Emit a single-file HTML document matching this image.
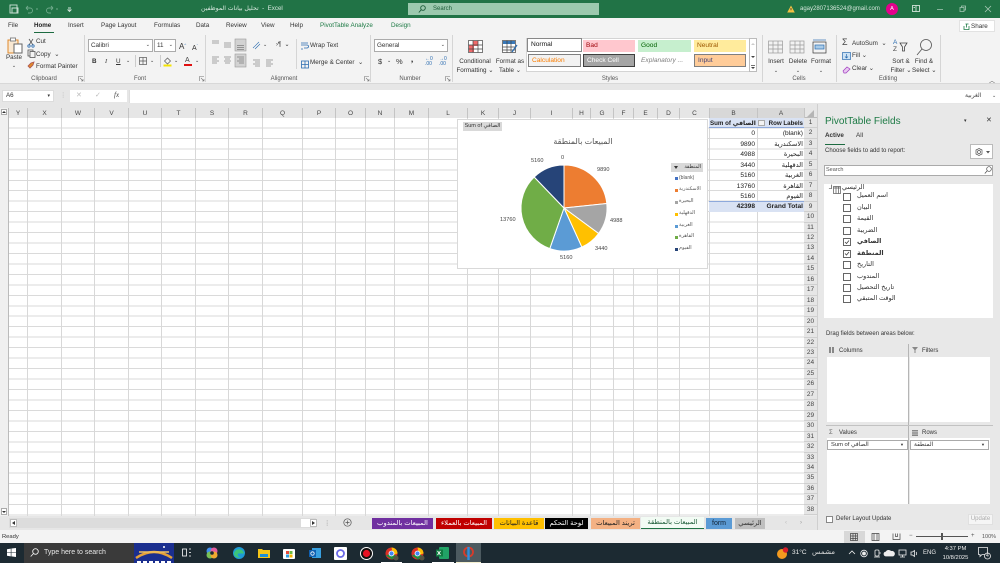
<!DOCTYPE html>
<html><head><meta charset="utf-8"><style>
html,body{margin:0;padding:0}
body{width:1000px;height:563px;overflow:hidden;position:relative;background:#e6e6e6;font:6.3px "Liberation Sans","DejaVu Sans",sans-serif;color:#333}
.a,.t,.c,.h{position:absolute}
.t{white-space:nowrap;line-height:9px}
.c{text-align:center;white-space:nowrap;line-height:8px}
.h{top:108px;height:10px;line-height:11px;text-align:center;font-size:6.5px;color:#444;background:#e6e6e6;border-right:1px solid #c4c4c4;box-sizing:border-box}
.v{position:absolute;top:118px;height:398px;width:1px;background:#d8d8d8}
.sep{position:absolute;width:1px;top:35px;height:47px;background:#d5d5d5}
.lab{position:absolute;top:75px;font-size:6px;color:#555;line-height:8px;text-align:center}
.box{position:absolute;background:#fff;border:1px solid #ababab;box-sizing:border-box}
.st{position:absolute;box-sizing:border-box;font-size:6.6px;line-height:12px;padding-left:3px;white-space:nowrap}
.cell{position:absolute;text-align:right;white-space:nowrap;font-size:6.6px;line-height:10px;color:#222;height:10px}
.tab{position:absolute;top:518px;height:11px;line-height:11px;text-align:center;font-size:6.8px;white-space:nowrap}
.cb{position:absolute;left:843px;width:6px;height:6px;border:1px solid #666;background:#fff}
.f{position:absolute;left:857px;font-size:6.5px;color:#333;line-height:8px;white-space:nowrap}
.lg{position:absolute;left:675px;width:3px;height:3px}
.lt{position:absolute;left:679px;font-size:5px;color:#555;line-height:7px;white-space:nowrap}
.pl{position:absolute;font-size:5.6px;color:#444;line-height:7px;white-space:nowrap}
.rows{position:absolute;left:804px;top:118px;width:13px;text-align:center;background:#e6e6e6;font-size:6.5px;color:#444;border-right:1px solid #c4c4c4}
.rows div{height:10.46px;line-height:10.46px;border-bottom:1px solid #cfcfcf;box-sizing:border-box}
svg{position:absolute;overflow:visible}
</style></head><body>

<!-- Title bar -->
<div class="a" style="left:0;top:0;width:1000px;height:18px;background:#217346"></div>
<svg style="left:9px;top:4px" width="10" height="10" fill="none" stroke="#cfe3d8" stroke-width=".9"><rect x="1" y="1" width="7" height="8"/><path d="M3 4h6v5H3z"/></svg>
<svg style="left:25px;top:5px" width="45" height="9" fill="none" stroke="#6fa98a" stroke-width=".9"><path d="M1 3l2-2M1 3l2 2M1 3h4a2.500 2.500 0 0 1 0 5H3M11 4h2M28 3l-2-2M28 3l-2 2M28 3h-4a2.500 2.500 0 0 0 0 5h2M31 4h2"/><path d="M43 3h3M43 5h3l-1.500 1.500z" stroke="#d4e6dc"/></svg>
<div class="t" style="left:201px;top:4px;font-size:6.200px;color:#d8e8df">تحليل بيانات الموظفين&nbsp; - &nbsp;Excel</div>
<div class="a" style="left:408px;top:3px;width:191px;height:12px;background:#9cc9ae"></div>
<svg style="left:418px;top:5px" width="8" height="8" fill="none" stroke="#1c5b38" stroke-width=".9"><circle cx="5" cy="3" r="2.300"/><path d="M3.300 4.700L.8 7.500"/></svg>
<div class="t" style="left:433px;top:5px;color:#1c5b38;font-size:6px">Search</div>
<svg style="left:787px;top:5px" width="8" height="8"><path d="M4 .5L7.800 7.500H.2z" fill="#f4c243"/><path d="M4 3v2.300" stroke="#333" stroke-width=".8"/></svg>
<div class="t" style="left:800px;top:5px;color:#d5e6dc;font-size:6px">agay2807136524@gmail.com</div>
<div class="a" style="left:886px;top:3px;width:12px;height:12px;border-radius:50%;background:#e3008c;color:#fff;font-size:5.500px;line-height:12px;text-align:center">A</div>
<svg style="left:912px;top:5px" width="8" height="7" fill="none" stroke="#e6f0ea" stroke-width=".8"><rect x=".5" y=".5" width="7" height="6"/><path d="M4 .5v6M1.500 2.500h1.500"/></svg>
<svg style="left:936px;top:5px" width="60" height="8" fill="none" stroke="#a8c9b6" stroke-width=".8"><path d="M1 4.500h6M24 2.500h4v4h-4zM25.500 2.500V1h4v4H28M49 1l6 6M55 1l-6 6"/></svg>

<!-- Tabs row -->
<div class="a" style="left:0;top:18px;width:1000px;height:66px;background:#f3f3f3"></div>
<div class="t" style="left:8px;top:21px">File</div>
<div class="t" style="left:34px;top:21px;color:#222;font-weight:bold;font-size:6.200px">Home</div>
<div class="a" style="left:34px;top:31.500px;width:20px;height:1px;background:#1d6b41"></div>
<div class="t" style="left:68px;top:21px">Insert</div>
<div class="t" style="left:101px;top:21px">Page Layout</div>
<div class="t" style="left:154px;top:21px">Formulas</div>
<div class="t" style="left:196px;top:21px">Data</div>
<div class="t" style="left:226px;top:21px">Review</div>
<div class="t" style="left:261px;top:21px">View</div>
<div class="t" style="left:290px;top:21px">Help</div>
<div class="t" style="left:320px;top:21px;color:#1d7a45">PivotTable Analyze</div>
<div class="t" style="left:391px;top:21px;color:#1d7a45">Design</div>
<div class="a" style="left:959px;top:20px;width:36px;height:12px;background:#fff;border:1px solid #e2e2e2;box-sizing:border-box"></div>
<svg style="left:963px;top:23px" width="7" height="7" fill="none" stroke="#1d7a45" stroke-width=".8"><path d="M1 3v3.500h5V3M3.500 4.500V1M2.500 1h3"/></svg>
<div class="t" style="left:971px;top:22px;font-size:6.300px">Share</div>

<!-- Ribbon separators -->
<div class="sep" style="left:84px"></div><div class="sep" style="left:205px"></div><div class="sep" style="left:370px"></div><div class="sep" style="left:452px"></div><div class="sep" style="left:762px"></div><div class="sep" style="left:836px"></div><div class="sep" style="left:940px"></div>
<div class="a" style="left:0;top:83px;width:1000px;height:1px;background:#d8d8d8"></div>

<!-- Clipboard -->
<svg style="left:7px;top:37px" width="16" height="17" fill="none"><rect x="1" y="3" width="10" height="13" stroke="#e08a2c" fill="#f9e8d2"/><rect x="3.500" y="1" width="5" height="3" stroke="#888" fill="#fff"/><rect x="7" y="7" width="8" height="9" fill="#fff" stroke="#666"/></svg>
<div class="c" style="left:4px;top:54px;width:20px">Paste</div>
<div class="c" style="left:4px;top:62px;width:20px;font-size:5px">⌄</div>
<svg style="left:27px;top:38px" width="9" height="30" fill="none" stroke="#555" stroke-width=".8"><path d="M2 1l4 6M6 1L2 7" /><circle cx="2" cy="8" r="1.200" stroke="#2b6cb0"/><circle cx="6" cy="8" r="1.200" stroke="#2b6cb0"/><rect x="1" y="12" width="5" height="6"/><rect x="3" y="13.500" width="5" height="6" fill="#f3f3f3"/><path d="M1 28l3-3 3-1-1 3-3 3z" fill="#e08a2c" stroke="#a55"/></svg>
<div class="t" style="left:36px;top:37px">Cut</div>
<div class="t" style="left:36px;top:50px">Copy &nbsp;⌄</div>
<div class="t" style="left:36px;top:62px">Format Painter</div>
<div class="lab" style="left:24px;width:40px">Clipboard</div>
<svg style="left:78px;top:76px" width="6" height="6" fill="none" stroke="#777" stroke-width=".6"><path d="M.5 5V.5H5M2 2l3 3M3 5h2V3"/></svg>

<!-- Font -->
<div class="box" style="left:88px;top:39px;width:65px;height:13px;line-height:11px;padding-left:2px">Calibri<span style="position:absolute;right:2px;font-size:5px">⌄</span></div>
<div class="box" style="left:154px;top:39px;width:22px;height:13px;line-height:11px;padding-left:2px">11<span style="position:absolute;right:2px;font-size:5px">⌄</span></div>
<div class="t" style="left:179px;top:40px;font-size:8px">A<span style="font-size:4px;color:#2b6cb0;vertical-align:3px">^</span></div>
<div class="t" style="left:192px;top:41px;font-size:7px">A<span style="font-size:4px;color:#2b6cb0;vertical-align:3px">ˇ</span></div>
<div class="t" style="left:92px;top:57px;font-weight:bold">B</div>
<div class="t" style="left:105px;top:57px;font-style:italic;font-family:'Liberation Serif',serif">I</div>
<div class="t" style="left:116px;top:57px;text-decoration:underline">U</div>
<div class="t" style="left:126px;top:57px;font-size:5px">⌄</div>
<div class="a" style="left:135px;top:55px;width:1px;height:12px;background:#ccc"></div>
<svg style="left:139px;top:57px" width="8" height="8" fill="none" stroke="#555" stroke-width=".7"><rect x=".5" y=".5" width="7" height="7"/><path d="M4 .5v7M.5 4h7"/></svg>
<div class="t" style="left:150px;top:57px;font-size:5px">⌄</div>
<div class="a" style="left:160px;top:55px;width:1px;height:12px;background:#ccc"></div>
<svg style="left:163px;top:57px" width="9" height="10"><path d="M4.500 1l3 3-3 3-3-3z" fill="none" stroke="#555" stroke-width=".7"/><rect x="0.500" y="7.500" width="8" height="2" fill="#f5e400"/></svg>
<div class="t" style="left:174px;top:57px;font-size:5px">⌄</div>
<div class="t" style="left:185px;top:56px;font-size:7px;color:#444">A</div>
<div class="a" style="left:184px;top:64px;width:8px;height:2px;background:#e01010"></div>
<div class="t" style="left:195px;top:57px;font-size:5px">⌄</div>
<div class="lab" style="left:125px;width:30px">Font</div>
<svg style="left:199px;top:76px" width="6" height="6" fill="none" stroke="#777" stroke-width=".6"><path d="M.5 5V.5H5M2 2l3 3M3 5h2V3"/></svg>

<!-- Alignment -->
<svg style="left:211px;top:39px" width="36" height="30" fill="none" stroke="#555" stroke-width=".6"><path d="M1 2h7M1 4h7M13 4h7M13 6h7M13 8h7"/><rect x="24" y="0" width="11" height="12" fill="#d2d2d2" stroke="#999"/><path d="M26 6.500h7M26 8.500h7M26 10.500h7"/><path d="M1 18h7M1 20h5M1 22h7M1 24h5M13 18h7M14 20h5M13 22h7M14 24h5"/><rect x="24" y="15" width="11" height="13" fill="#d2d2d2" stroke="#999"/><path d="M26 18h7M28 20h5M26 22h7M28 24h5"/></svg>
<svg style="left:252px;top:41px" width="22" height="26" fill="none" stroke="#555" stroke-width=".6"><path d="M1 7L7 1M3 8l5-5" stroke="#2b6cb0"/><path d="M1 19h7M3 21h5M1 23h7M3 25h5M14 19h7M14 21h5M14 23h7M14 25h5"/></svg>
<div class="t" style="left:263px;top:41px;font-size:5px">⌄</div>
<div class="t" style="left:276px;top:41px;font-size:6px">›¶ &nbsp;⌄</div>
<div class="a" style="left:296px;top:39px;width:1px;height:30px;background:#d5d5d5"></div>
<svg style="left:301px;top:41px" width="8" height="30" fill="none" stroke="#2b6cb0" stroke-width=".8"><path d="M0 2h7M0 4h6a1.500 1.500 0 0 1 0 3H3M0 8h2"/><rect x=".5" y="20" width="7" height="7"/><path d="M.5 23.500h7M4 20v7"/></svg>
<div class="t" style="left:310px;top:41px">Wrap Text</div>
<div class="t" style="left:310px;top:58px">Merge &amp; Center &nbsp;⌄</div>
<div class="lab" style="left:268px;width:32px">Alignment</div>
<svg style="left:364px;top:76px" width="6" height="6" fill="none" stroke="#777" stroke-width=".6"><path d="M.5 5V.5H5M2 2l3 3M3 5h2V3"/></svg>

<!-- Number -->
<div class="box" style="left:374px;top:39px;width:74px;height:13px;line-height:11px;padding-left:2px">General<span style="position:absolute;right:2px;font-size:5px">⌄</span></div>
<div class="t" style="left:378px;top:57px;font-size:7.500px">$</div>
<div class="t" style="left:387px;top:57px;font-size:5px">⌄</div>
<div class="t" style="left:396px;top:57px;font-size:7.500px">%</div>
<div class="t" style="left:411px;top:55px;font-size:9px;font-weight:bold;font-family:'Liberation Serif',serif">,</div>
<div class="t" style="left:425px;top:57px;font-size:5px;line-height:5px;color:#2b6cb0">←0<br>.00</div>
<div class="t" style="left:439px;top:57px;font-size:5px;line-height:5px;color:#2b6cb0">→0<br>.00</div>
<div class="lab" style="left:395px;width:30px">Number</div>
<svg style="left:445px;top:76px" width="6" height="6" fill="none" stroke="#777" stroke-width=".6"><path d="M.5 5V.5H5M2 2l3 3M3 5h2V3"/></svg>

<!-- Styles -->
<svg style="left:468px;top:40px" width="15" height="14" stroke="#444" stroke-width=".7"><rect x=".5" y=".5" width="14" height="12" fill="#fff"/><rect x="1" y="5" width="5" height="7" fill="#ef6a6a" stroke="none"/><rect x="5" y="1" width="5" height="5" fill="#ef6a6a" stroke="none"/><path d="M5 .5v12M10 .5v12M.5 5h14M.5 9h14" fill="none"/></svg>
<div class="c" style="left:456px;top:58px;width:38px">Conditional</div>
<div class="c" style="left:456px;top:67px;width:38px">Formatting ⌄</div>
<svg style="left:502px;top:40px" width="16" height="14" stroke="#444" stroke-width=".7" fill="none"><rect x=".5" y=".5" width="13" height="12" fill="#fff"/><rect x="1" y="1" width="12" height="3" fill="#3978b8" stroke="none"/><path d="M5 .5v12M9 .5v12M.5 7h13M.5 10h13"/><path d="M15 5l-5 7" stroke="#2b6cb0" stroke-width="1.300"/></svg>
<div class="c" style="left:495px;top:58px;width:30px">Format as</div>
<div class="c" style="left:495px;top:67px;width:30px">Table ⌄</div>
<div class="a" style="left:526px;top:38px;width:231px;height:34px;background:#fff;border:1px solid #d4d4d4;box-sizing:border-box"></div>
<div class="st" style="left:527px;top:38px;width:55px;height:14px;background:#fff;border:1px solid #888;color:#111;line-height:12px">Normal</div>
<div class="st" style="left:583px;top:40px;width:52px;height:12px;background:#ffc7ce;color:#9c0006;line-height:11px">Bad</div>
<div class="st" style="left:638px;top:40px;width:53px;height:12px;background:#c6efce;color:#006100;line-height:11px">Good</div>
<div class="st" style="left:694px;top:40px;width:52px;height:12px;background:#ffeb9c;color:#9c5700;line-height:11px">Neutral</div>
<div class="st" style="left:528px;top:54px;width:53px;height:13px;background:#f2f2f2;border:1px solid #7f7f7f;color:#fa7d00;line-height:11px">Calculation</div>
<div class="st" style="left:583px;top:54px;width:52px;height:13px;background:#a5a5a5;border:1px solid #3f3f3f;color:#fff;line-height:11px">Check Cell</div>
<div class="st" style="left:638px;top:54px;width:53px;height:13px;color:#7f7f7f;font-style:italic;line-height:13px">Explanatory ...</div>
<div class="st" style="left:694px;top:54px;width:52px;height:13px;background:#ffcc99;border:1px solid #7f7f7f;color:#3f3f76;line-height:11px">Input</div>
<div class="a" style="left:749px;top:38px;width:8px;height:34px;background:#fff;border:1px solid #bbb;box-sizing:border-box"></div>
<svg style="left:750px;top:42px" width="6" height="28" fill="#444"><path d="M1 3l2-2 2 2z" fill="#ccc"/><path d="M1 14h4l-2 2z"/><path d="M1 23h4v.8H1zM1 25h4l-2 2z"/></svg>
<div class="lab" style="left:590px;width:40px">Styles</div>

<!-- Cells -->
<svg style="left:768px;top:40px" width="60" height="14" fill="none" stroke="#999" stroke-width=".7"><rect x=".5" y="1" width="14" height="12" fill="#f2f2f2"/><path d="M.5 5h14M.5 9h14M5 1v12M10 1v12"/><rect x="22" y="1" width="14" height="12" fill="#f2f2f2"/><path d="M22 5h14M22 9h14M27 1v12M32 1v12"/><rect x="45" y="2" width="13" height="11" stroke="#333"/><rect x="47" y="5" width="9" height="4" fill="#a9cbe8" stroke="#2b6cb0"/><path d="M45 0h13" stroke="#2b6cb0"/></svg>
<div class="c" style="left:764px;top:58px;width:24px">Insert</div><div class="c" style="left:764px;top:67px;width:24px;font-size:5px">⌄</div>
<div class="c" style="left:786px;top:58px;width:24px">Delete</div><div class="c" style="left:786px;top:67px;width:24px;font-size:5px">⌄</div>
<div class="c" style="left:808px;top:58px;width:26px">Format</div><div class="c" style="left:808px;top:67px;width:26px;font-size:5px">⌄</div>
<div class="lab" style="left:785px;width:28px">Cells</div>

<!-- Editing -->
<div class="t" style="left:842px;top:38px;font-size:9px;color:#444">Σ</div>
<div class="t" style="left:852px;top:39px">AutoSum &nbsp;⌄</div>
<svg style="left:842px;top:52px" width="9" height="22" fill="none" stroke="#555" stroke-width=".7"><rect x=".5" y=".5" width="8" height="7" fill="#cde2f4" stroke="#2b6cb0"/><path d="M4.500 2v4M3 4.500l1.500 1.500L6 4.500" stroke="#2b6cb0"/><path d="M1 19l4-4 3 2-4 4H2z" stroke="#a03cc0" fill="#e8c8f0"/></svg>
<div class="t" style="left:852px;top:51px">Fill ⌄</div>
<div class="t" style="left:852px;top:64px">Clear ⌄</div>
<div class="t" style="left:893px;top:39px;font-size:6.500px;line-height:7px;color:#2b6cb0">A<br><span style="color:#444">Z</span></div>
<svg style="left:899px;top:42px" width="9" height="11" fill="none" stroke="#444" stroke-width=".8"><path d="M1 1h7L5.500 5v4h-2V5z"/></svg>
<svg style="left:916px;top:38px" width="16" height="18" fill="none" stroke="#555" stroke-width=".8"><circle cx="10" cy="7" r="5.500"/><path d="M6 11L1 17"/></svg>
<div class="c" style="left:889px;top:58px;width:24px">Sort &amp;</div><div class="c" style="left:889px;top:67px;width:24px">Filter ⌄</div>
<div class="c" style="left:912px;top:58px;width:24px">Find &amp;</div><div class="c" style="left:912px;top:67px;width:24px">Select ⌄</div>
<div class="lab" style="left:870px;width:36px">Editing</div>
<div class="t" style="left:989px;top:78px;font-size:6px;color:#555">︿</div>

<!-- Formula bar -->
<div class="box" style="left:2px;top:90px;width:52px;height:12px;border-color:#dcdcdc;line-height:10px;padding-left:3px;font-size:6.200px">A6<span style="position:absolute;right:3px;font-size:5px">▾</span></div>
<div class="t" style="left:60px;top:91px;color:#aaa">⋮</div>
<div class="a" style="left:70px;top:90px;width:57px;height:12px;background:#fff"></div>
<div class="t" style="left:76px;top:91px;color:#bbb;font-size:7px">✕</div>
<div class="t" style="left:95px;top:91px;color:#bbb;font-size:7px">✓</div>
<div class="t" style="left:114px;top:91px;color:#444;font-style:italic;font-family:'Liberation Serif',serif;font-size:7px">fx</div>
<div class="a" style="left:129px;top:90px;width:871px;height:13px;background:#fff;border-left:1px solid #ddd"></div>
<div class="t" style="left:965px;top:92px;color:#444;font-size:6px">الغربية</div>
<div class="t" style="left:992px;top:92px;color:#444;font-size:5px">⌄</div>

<!-- Sheet -->
<div class="a" style="left:0;top:118px;width:817px;height:398px;background:#fff repeating-linear-gradient(to bottom,transparent 0,transparent 9.46px,#dadada 9.46px,#dadada 10.46px)"></div>
<div class="a" style="left:0;top:107px;width:817px;height:11px;background:#e6e6e6;border-bottom:1px solid #bbb;box-sizing:border-box"></div>
<div class="a" style="left:0;top:108px;width:9px;height:408px;background:#f0f0f0;border-right:1px solid #bbb;box-sizing:border-box"></div>
<div class="a" style="left:1px;top:109px;width:6px;height:6px;background:#fff;border:1px solid #aaa;box-sizing:border-box"></div>
<svg style="left:2px;top:110px" width="4" height="4"><path d="M0 3l2-2 2 2z" fill="#333"/></svg>
<div class="a" style="left:1px;top:508px;width:6px;height:7px;background:#fff;border:1px solid #aaa;box-sizing:border-box"></div>
<svg style="left:2px;top:510px" width="4" height="4"><path d="M0 1l2 2 2-2z" fill="#333"/></svg>

<!-- vertical lines -->
<div class="v" style="left:27px"></div><div class="v" style="left:61px"></div><div class="v" style="left:94px"></div><div class="v" style="left:128px"></div><div class="v" style="left:161px"></div><div class="v" style="left:195px"></div><div class="v" style="left:228px"></div><div class="v" style="left:262px"></div><div class="v" style="left:302px"></div><div class="v" style="left:335px"></div><div class="v" style="left:365px"></div><div class="v" style="left:394px"></div><div class="v" style="left:428px"></div><div class="v" style="left:467px"></div><div class="v" style="left:498px"></div><div class="v" style="left:530px"></div><div class="v" style="left:572px"></div><div class="v" style="left:590px"></div><div class="v" style="left:613px"></div><div class="v" style="left:633px"></div><div class="v" style="left:657px"></div><div class="v" style="left:679px"></div><div class="v" style="left:709px"></div><div class="v" style="left:757px"></div>

<!-- column headers -->
<div class="h" style="left:9px;width:19px">Y</div><div class="h" style="left:28px;width:34px">X</div><div class="h" style="left:62px;width:33px">W</div><div class="h" style="left:95px;width:34px">V</div><div class="h" style="left:129px;width:33px">U</div><div class="h" style="left:162px;width:34px">T</div><div class="h" style="left:196px;width:33px">S</div><div class="h" style="left:229px;width:34px">R</div><div class="h" style="left:263px;width:40px">Q</div><div class="h" style="left:303px;width:33px">P</div><div class="h" style="left:336px;width:30px">O</div><div class="h" style="left:366px;width:29px">N</div><div class="h" style="left:395px;width:34px">M</div><div class="h" style="left:429px;width:39px">L</div><div class="h" style="left:468px;width:31px">K</div><div class="h" style="left:499px;width:32px">J</div><div class="h" style="left:531px;width:42px">I</div><div class="h" style="left:573px;width:18px">H</div><div class="h" style="left:591px;width:23px">G</div><div class="h" style="left:614px;width:20px">F</div><div class="h" style="left:634px;width:24px">E</div><div class="h" style="left:658px;width:22px">D</div><div class="h" style="left:680px;width:30px">C</div><div class="h" style="left:710px;width:48px;background:#d8d8d8">B</div><div class="h" style="left:758px;width:47px;background:#d8d8d8">A</div>
<svg style="left:806px;top:109px" width="10" height="9"><path d="M8 1v7H1z" fill="#b5b5b5"/></svg>

<!-- row headers -->
<div class="rows"><div>1</div><div>2</div><div>3</div><div>4</div><div>5</div><div>6</div><div>7</div><div>8</div><div>9</div><div>10</div><div>11</div><div>12</div><div>13</div><div>14</div><div>15</div><div>16</div><div>17</div><div>18</div><div>19</div><div>20</div><div>21</div><div>22</div><div>23</div><div>24</div><div>25</div><div>26</div><div>27</div><div>28</div><div>29</div><div>30</div><div>31</div><div>32</div><div>33</div><div>34</div><div>35</div><div>36</div><div>37</div><div>38</div></div>

<!-- Pivot table -->
<div class="a" style="left:709px;top:118px;width:95px;height:10px;background:#d9e2f3;border-bottom:1px solid #8ea9db;box-sizing:border-box"></div>
<div class="cell" style="left:710px;top:119px;width:43px;font-weight:bold;font-size:6.200px">Sum of الصافي</div>
<div class="a" style="left:758px;top:120px;width:7px;height:6px;background:#f3f3f3;border:1px solid #aaa;box-sizing:border-box"></div>
<div class="cell" style="left:760px;top:119px;width:43px;font-weight:bold;font-size:6.200px">Row Labels</div>
<div class="cell" style="left:710px;top:129px;width:45px">0</div><div class="cell" style="left:760px;top:129px;width:43px">(blank)</div>
<div class="cell" style="left:710px;top:139.500px;width:45px">9890</div><div class="cell" style="left:760px;top:139.500px;width:43px">الاسكندرية</div>
<div class="cell" style="left:710px;top:150px;width:45px">4988</div><div class="cell" style="left:760px;top:150px;width:43px">البحيرة</div>
<div class="cell" style="left:710px;top:160.500px;width:45px">3440</div><div class="cell" style="left:760px;top:160.500px;width:43px">الدقهلية</div>
<div class="cell" style="left:710px;top:171px;width:45px">5160</div><div class="cell" style="left:760px;top:171px;width:43px">الغربية</div>
<div class="cell" style="left:710px;top:181.500px;width:45px">13760</div><div class="cell" style="left:760px;top:181.500px;width:43px">القاهرة</div>
<div class="cell" style="left:710px;top:192px;width:45px">5160</div><div class="cell" style="left:760px;top:192px;width:43px">الفيوم</div>
<div class="a" style="left:709px;top:201px;width:95px;height:11px;background:#d9e2f3;border-top:1px solid #8ea9db;box-sizing:border-box"></div>
<div class="cell" style="left:710px;top:202px;width:45px;font-weight:bold">42398</div><div class="cell" style="left:760px;top:202px;width:43px;font-weight:bold">Grand Total</div>

<!-- Chart -->
<div class="a" style="left:457px;top:119px;width:251px;height:150px;background:#fff;border:1px solid #d9d9d9;box-sizing:border-box"></div>
<div class="a" style="left:463px;top:122px;width:39px;height:9px;background:#d9d9d9;font-size:5.500px;line-height:9px;text-align:center;color:#333;white-space:nowrap">Sum of الصافي</div>
<div class="t" style="left:553px;top:137px;width:60px;text-align:center;font-size:8px;color:#555">المبيعات بالمنطقة</div>
<svg style="left:564px;top:208px" width="1" height="1"><g stroke="#fff" stroke-width="1"><path d="M0 0V-43A43 43 0 0 1 42.800 -4.500Z" fill="#ed7d31"/><path d="M0 0L42.800 -4.500A43 43 0 0 1 34.600 25.500Z" fill="#a5a5a5"/><path d="M0 0L34.600 25.500A43 43 0 0 1 17.800 39.100Z" fill="#ffc000"/><path d="M0 0L17.800 39.100A43 43 0 0 1 -14.200 40.600Z" fill="#5b9bd5"/><path d="M0 0L-14.200 40.600A43 43 0 0 1 -29.800 -31Z" fill="#70ad47"/><path d="M0 0L-29.800 -31A43 43 0 0 1 0 -43Z" fill="#264478"/></g></svg>
<div class="pl" style="left:561px;top:155px">0</div>
<div class="pl" style="left:597px;top:167px">9890</div>
<div class="pl" style="left:610px;top:218px">4988</div>
<div class="pl" style="left:595px;top:246px">3440</div>
<div class="pl" style="left:560px;top:255px">5160</div>
<div class="pl" style="left:500px;top:217px">13760</div>
<div class="pl" style="left:531px;top:158px">5160</div>
<div class="a" style="left:671px;top:163px;width:32px;height:9px;background:#d9d9d9;font-size:5px;line-height:9px;text-align:right;padding-right:2px;box-sizing:border-box;color:#333">المنطقة</div>
<svg style="left:674px;top:166px" width="4" height="3"><path d="M0 0h4L2 3z" fill="#333"/></svg>
<div class="lg" style="top:177px;background:#4472c4"></div><div class="lt" style="top:175px">(blank)</div>
<div class="lg" style="top:189px;background:#ed7d31"></div><div class="lt" style="top:186px">الاسكندرية</div>
<div class="lg" style="top:201px;background:#a5a5a5"></div><div class="lt" style="top:198px">البحيرة</div>
<div class="lg" style="top:213px;background:#ffc000"></div><div class="lt" style="top:210px">الدقهلية</div>
<div class="lg" style="top:225px;background:#5b9bd5"></div><div class="lt" style="top:222px">الغربية</div>
<div class="lg" style="top:236px;background:#70ad47"></div><div class="lt" style="top:233px">القاهرة</div>
<div class="lg" style="top:248px;background:#264478"></div><div class="lt" style="top:245px">الفيوم</div>

<!-- Pane -->
<div class="a" style="left:817px;top:104px;width:183px;height:426px;background:#e8e8e8;border-left:1px solid #cfcfcf;box-sizing:border-box"></div>
<div class="t" style="left:825px;top:116px;font-size:10px;line-height:12px;color:#1d7a45">PivotTable Fields</div>
<div class="t" style="left:964px;top:117px;font-size:5px">▾</div>
<div class="t" style="left:986px;top:116px;font-size:7px">✕</div>
<div class="t" style="left:825px;top:131px;font-weight:bold">Active</div>
<div class="t" style="left:856px;top:131px">All</div>
<div class="a" style="left:825px;top:144px;width:20px;height:1px;background:#1d6b41"></div>
<div class="t" style="left:825px;top:147px;font-size:6px">Choose fields to add to report:</div>
<div class="box" style="left:970px;top:144px;width:23px;height:15px;border-color:#bbb"></div>
<svg style="left:975px;top:148px" width="15" height="8" fill="none" stroke="#555" stroke-width=".7"><circle cx="4" cy="4" r="1.500"/><path d="M4 .5l3 1.500v4L4 7.500 1 6V2z"/><path d="M11 3h4l-2 2.500z" fill="#555" stroke="none"/></svg>
<div class="box" style="left:824px;top:165px;width:169px;height:11px;border-color:#aaa;line-height:9px;padding-left:1px;font-size:5.500px;color:#555">Search</div>
<svg style="left:984px;top:166px" width="8" height="8" fill="none" stroke="#444" stroke-width=".7"><circle cx="5" cy="3" r="2.300"/><path d="M3.300 4.700L.8 7.500"/></svg>
<div class="a" style="left:824px;top:184px;width:169px;height:134px;background:#fff"></div>
<div class="t" style="left:829px;top:184px;font-size:6px">⅃</div>
<svg style="left:833px;top:186px" width="8" height="8" fill="none" stroke="#555" stroke-width=".7"><rect x=".5" y=".5" width="7" height="7"/><path d="M.5 2h7M3 .5v7M5.500 .5v7"/></svg>
<div class="f" style="left:842px;top:184px">الرئيسي</div>
<div class="cb" style="top:192.500px"></div><div class="f" style="top:192px">اسم العميل</div>
<div class="cb" style="top:204px"></div><div class="f" style="top:204px">البيان</div>
<div class="cb" style="top:215px"></div><div class="f" style="top:215px">القيمة</div>
<div class="cb" style="top:226.500px"></div><div class="f" style="top:226.500px">الضريبة</div>
<div class="cb" style="top:238px"></div><div class="f" style="top:238px;font-weight:bold">الصافي</div>
<div class="cb" style="top:249.500px"></div><div class="f" style="top:249.500px;font-weight:bold">المنطقة</div>
<div class="cb" style="top:261px"></div><div class="f" style="top:261px">التاريخ</div>
<div class="cb" style="top:272.500px"></div><div class="f" style="top:272.500px">المندوب</div>
<div class="cb" style="top:284px"></div><div class="f" style="top:284px">تاريخ التحصيل</div>
<div class="cb" style="top:295px"></div><div class="f" style="top:295px">الوقت المتبقي</div>
<svg style="left:844px;top:239px" width="6" height="18" fill="none" stroke="#444" stroke-width=".8"><path d="M1 3l1.500 1.500L5 1.500M1 14.500l1.500 1.500L5 13"/></svg>

<div class="t" style="left:826px;top:330px;font-size:6px">Drag fields between areas below:</div>
<svg style="left:829px;top:347px" width="6" height="6" fill="#888"><path d="M0 0h2v6H0zM3 0h2v6H3z"/></svg>
<div class="t" style="left:839px;top:347px;font-size:6px">Columns</div>
<svg style="left:912px;top:347px" width="6" height="6" fill="#888"><path d="M0 0h6L3.500 3v3h-1V3z"/></svg>
<div class="t" style="left:922px;top:347px;font-size:6px">Filters</div>
<div class="a" style="left:827px;top:357px;width:81px;height:65px;background:#fff"></div>
<div class="a" style="left:910px;top:357px;width:80px;height:65px;background:#fff"></div>
<div class="a" style="left:908px;top:344px;width:1px;height:160px;background:#b5b5b5"></div>
<div class="a" style="left:826px;top:425px;width:167px;height:1px;background:#c2c2c2"></div>
<div class="t" style="left:829px;top:429px;font-size:6px;color:#666">Σ</div>
<div class="t" style="left:839px;top:429px;font-size:6px">Values</div>
<svg style="left:912px;top:430px" width="6" height="6" fill="#888"><path d="M0 0h6v1.500H0zM0 2.200h6v1.500H0zM0 4.400h6V6H0z"/></svg>
<div class="t" style="left:922px;top:429px;font-size:6px">Rows</div>
<div class="a" style="left:827px;top:438px;width:81px;height:66px;background:#fff"></div>
<div class="a" style="left:910px;top:438px;width:80px;height:66px;background:#fff"></div>
<div class="box" style="left:827px;top:440px;width:81px;height:10px;border-color:#aaa;line-height:8px;padding-left:3px;font-size:5.800px">Sum of الصافي<span style="position:absolute;right:3px;font-size:4px">▼</span></div>
<div class="box" style="left:910px;top:440px;width:79px;height:10px;border-color:#aaa;line-height:8px;padding-left:3px;font-size:5.800px">المنطقة<span style="position:absolute;right:3px;font-size:4px">▼</span></div>
<div class="a" style="left:826px;top:516px;width:7px;height:7px;background:#fff;border:1px solid #888;box-sizing:border-box"></div>
<div class="t" style="left:836px;top:515px;font-size:6px">Defer Layout Update</div>
<div class="a" style="left:968px;top:514px;width:25px;height:11px;background:#f5f5f5;border:1px solid #e0e0e0;box-sizing:border-box;text-align:center;line-height:9px;font-size:6px;color:#aaa">Update</div>

<!-- Hscroll and tabs -->
<div class="a" style="left:0;top:516px;width:817px;height:14px;background:#e6e6e6"></div>
<div class="a" style="left:9px;top:518px;width:307px;height:10px;background:#dcdcdc"></div>
<div class="a" style="left:10px;top:519px;width:7px;height:8px;background:#fff;border:1px solid #bbb;box-sizing:border-box"></div>
<svg style="left:12px;top:521px" width="3" height="4"><path d="M3 0v4L0 2z" fill="#333"/></svg>
<div class="a" style="left:301px;top:519px;width:9px;height:8px;background:#fff"></div>
<div class="a" style="left:310px;top:519px;width:7px;height:8px;background:#fff;border:1px solid #bbb;box-sizing:border-box"></div>
<svg style="left:312px;top:521px" width="3" height="4"><path d="M0 0v4l3-2z" fill="#333"/></svg>
<div class="t" style="left:324px;top:519px;color:#777">⋮</div>
<svg style="left:343px;top:518px" width="9" height="9" fill="none" stroke="#555" stroke-width=".7"><circle cx="4.500" cy="4.500" r="3.700"/><path d="M4.500 2.500v4M2.500 4.500h4"/></svg>
<div class="tab" style="left:372px;width:61px;background:#7030a0;color:#fff">المبيعات بالمندوب</div>
<div class="tab" style="left:436px;width:56px;background:#c00000;color:#fff">المبيعات بالعملاء</div>
<div class="tab" style="left:494px;width:50px;background:#ffc000;color:#222">قاعدة البيانات</div>
<div class="tab" style="left:545px;width:43px;background:#000;color:#fff">لوحة التحكم</div>
<div class="tab" style="left:591px;width:49px;background:#f4b183;color:#222">تريند المبيعات</div>
<div class="tab" style="left:641px;width:63px;background:#f2fbf4;color:#1c5b38;border-bottom:1px solid #217346;box-sizing:border-box;top:517px;height:12px">المبيعات بالمنطقة</div>
<div class="tab" style="left:706px;width:26px;background:#5b9bd5;color:#123;font-size:7px">form</div>
<div class="tab" style="left:735px;width:30px;background:#bfbfbf;color:#333">الرئيسي</div>
<div class="t" style="left:785px;top:519px;color:#bbb;font-size:6px">‹</div>
<div class="t" style="left:800px;top:519px;color:#999;font-size:6px">›</div>

<!-- Status bar -->
<div class="a" style="left:0;top:530px;width:1000px;height:13px;background:#f3f3f3"></div>
<div class="t" style="left:2px;top:533px;font-size:5.800px">Ready</div>
<div class="a" style="left:844px;top:531px;width:21px;height:12px;background:#d8d8d8"></div>
<svg style="left:850px;top:533px" width="65" height="8" fill="none" stroke="#444" stroke-width=".7"><path d="M.5 .5h7v7h-7zM.5 3h7M.5 5.500h7M3 .5v7M5.500 .5v7"/><path d="M22 .5h7v7h-7zM24 .5v7M27 .5v7M43 .5v6h7v-6M45.500 .5v3h2v-3"/></svg>
<div class="t" style="left:909px;top:532px;font-size:6px;color:#555">−</div>
<div class="a" style="left:916px;top:536px;width:52px;height:1px;background:#555"></div>
<div class="a" style="left:941px;top:533px;width:2px;height:7px;background:#555"></div>
<div class="t" style="left:971px;top:532px;font-size:6px;color:#555">+</div>
<div class="t" style="left:982px;top:533px;font-size:5.500px;color:#555">100%</div>

<!-- Taskbar -->
<div class="a" style="left:0;top:543px;width:1000px;height:20px;background:#1c2a32"></div>
<svg style="left:7px;top:548px" width="9" height="9" fill="#fff"><path d="M0 1.200L3.800.6v3.600H0zM4.400.5L9 0v4.200H4.400zM0 4.800h3.800v3.600L0 7.800zM4.400 4.800H9V9l-4.600-.6z"/></svg>
<div class="a" style="left:24px;top:543px;width:150px;height:20px;background:#3a3a3a"></div>
<svg style="left:30px;top:548px" width="9" height="9" fill="none" stroke="#eee" stroke-width=".9"><circle cx="5.500" cy="3.500" r="2.800"/><path d="M3.500 5.500L.7 8.500"/></svg>
<div class="t" style="left:44px;top:548px;font-size:7px;color:#e8e8e8">Type here to search</div>
<svg style="left:134px;top:543px" width="40" height="20"><rect width="40" height="20" fill="#1b2f8f"/><path d="M2 15q18-12 36 0" stroke="#e5a23a" stroke-width="2.500" fill="none"/><path d="M5 9h30" stroke="#f0c060" stroke-width="1.500"/><path d="M3 19h34" stroke="#fff" stroke-width="2" stroke-dasharray="4 2"/><circle cx="30" cy="4" r="1" fill="#fff"/></svg>
<svg style="left:182px;top:548px" width="9" height="9" fill="none" stroke="#fff" stroke-width=".8"><rect x=".5" y="1" width="4" height="7"/><path d="M7 1h2M7 4.500h2M7 8h2"/></svg>
<svg style="left:206px;top:547px" width="12" height="12"><circle cx="4" cy="4" r="3.500" fill="#3f8ef0"/><circle cx="8" cy="4" r="3.500" fill="#e45ea0"/><circle cx="4" cy="8" r="3.500" fill="#79c257"/><circle cx="8" cy="8" r="3.500" fill="#f0a830"/><circle cx="6" cy="6" r="1.800" fill="#1c2a32"/></svg>
<svg style="left:233px;top:547px" width="12" height="12"><circle cx="6" cy="6" r="6" fill="#1e9ad6"/><path d="M1 8a5 5 0 0 1 10-1.500H5a2.500 2.500 0 0 0 3 3.500 5 5 0 0 1-7-2z" fill="#3cc47a"/></svg>
<svg style="left:258px;top:548px" width="12" height="10"><path d="M0 1h4l1 1h7v8H0z" fill="#f5c518"/><rect x="2" y="6" width="8" height="3" fill="#1d8fd6"/></svg>
<svg style="left:283px;top:547px" width="12" height="12"><rect y="2" width="12" height="10" rx="1" fill="#fff"/><rect x="3" y="4" width="3" height="3" fill="#e74c3c"/><rect x="6.500" y="4" width="3" height="3" fill="#6dbb3f"/><rect x="3" y="7.500" width="3" height="3" fill="#2f9fe4"/><rect x="6.500" y="7.500" width="3" height="3" fill="#f4b400"/></svg>
<svg style="left:309px;top:547px" width="12" height="12"><rect x="3" y="1" width="9" height="10" fill="#38a0e0"/><rect y="3" width="7" height="7" fill="#0f5fb0"/><circle cx="3.500" cy="6.500" r="1.700" fill="none" stroke="#fff" stroke-width=".8"/></svg>
<svg style="left:334px;top:547px" width="13" height="13"><rect width="13" height="13" rx="1" fill="#fff"/><circle cx="6.500" cy="6.500" r="3.500" fill="none" stroke="#6a6ae8" stroke-width="1.800"/></svg>
<svg style="left:360px;top:547px" width="13" height="13"><circle cx="6.500" cy="6.500" r="6" fill="#111" stroke="#fff"/><circle cx="6.500" cy="6.500" r="3.600" fill="#e81123"/></svg>
<svg style="left:385px;top:547px" width="14" height="14"><circle cx="6.500" cy="6.500" r="6" fill="#d93025"/><path d="M6.500 6.500L12 9 7 12.500.9 8.500z" fill="#1e8e3e"/><path d="M6.500 .5A6 6 0 0 1 12.500 6.500L8 8z" fill="#fbbc04"/><circle cx="6.500" cy="6.500" r="2.500" fill="#4285f4" stroke="#fff" stroke-width=".8"/><circle cx="11" cy="11" r="2.500" fill="#554"/></svg>
<svg style="left:411px;top:547px" width="14" height="14"><circle cx="6.500" cy="6.500" r="6" fill="#d93025"/><path d="M6.500 6.500L12 9 7 12.500.9 8.500z" fill="#1e8e3e"/><path d="M6.500 .5A6 6 0 0 1 12.500 6.500L8 8z" fill="#fbbc04"/><circle cx="6.500" cy="6.500" r="2.500" fill="#4285f4" stroke="#fff" stroke-width=".8"/><circle cx="11" cy="11" r="2.500" fill="#554"/></svg>
<svg style="left:436px;top:547px" width="13" height="12"><rect x="3" y="0" width="10" height="12" rx="1" fill="#21a366"/><rect y="2.500" width="7" height="7" fill="#107c41"/><path d="M1.500 4l3 4M4.500 4l-3 4" stroke="#fff" stroke-width=".9"/></svg>
<div class="a" style="left:456px;top:543px;width:25px;height:20px;background:#4c5a60"></div>
<svg style="left:463px;top:546px" width="11" height="15"><circle cx="5.500" cy="6" r="4.500" fill="none" stroke="#d83b2a" stroke-width="1.800"/><rect x="4.300" y="1" width="2.400" height="13" fill="#2a8fe0"/></svg>
<div class="a" style="left:381px;top:562px;width:21px;height:1px;background:#fff"></div><div class="a" style="left:432px;top:562px;width:22px;height:1px;background:#fff"></div><div class="a" style="left:456px;top:562px;width:25px;height:1px;background:#f5f0d0"></div>
<svg style="left:776px;top:547px" width="13" height="13"><circle cx="6" cy="7" r="5" fill="#f39a1f"/><circle cx="9.500" cy="3" r="2.700" fill="#d81e2c"/></svg>
<div class="t" style="left:792px;top:548px;font-size:6.500px;color:#eee">31°C</div>
<div class="t" style="left:812px;top:548px;font-size:7px;color:#ddd">مشمس</div>
<svg style="left:847px;top:549px" width="100" height="9" fill="none" stroke="#eee" stroke-width=".8"><path d="M2 5l3-3 3 3"/><circle cx="17" cy="4.500" r="3.300"/><circle cx="17" cy="4.500" r="1.500" fill="#eee"/><rect x="28" y="1" width="4" height="6" rx="1"/><path d="M32 4h2M27 8h6"/><path d="M39 7a2 2 0 0 1 0-4 3 3 0 0 1 5-.5 2.300 2.300 0 0 1 2 4.500z" fill="#eee"/><rect x="52" y="1" width="7" height="5"/><path d="M55.500 6v2M53 8h5M64 3v3h1.500l2 1.500v-6l-2 1.500zM69 3a2 2 0 0 1 0 3"/></svg>
<div class="t" style="left:923px;top:549px;font-size:6px;color:#eee">ENG</div>
<div class="t" style="left:942px;top:545px;width:27px;text-align:center;font-size:5.800px;color:#eee;line-height:9px">4:37 PM<br>10/8/2025</div>
<svg style="left:978px;top:547px" width="14" height="13" fill="none" stroke="#eee" stroke-width=".8"><path d="M.5 .5h9v7H4l-2 2v-2H.5z"/><circle cx="9.500" cy="9" r="3" fill="#1c2a32"/></svg>
<div class="t" style="left:986px;top:552px;font-size:5px;color:#eee">4</div>
</body></html>
